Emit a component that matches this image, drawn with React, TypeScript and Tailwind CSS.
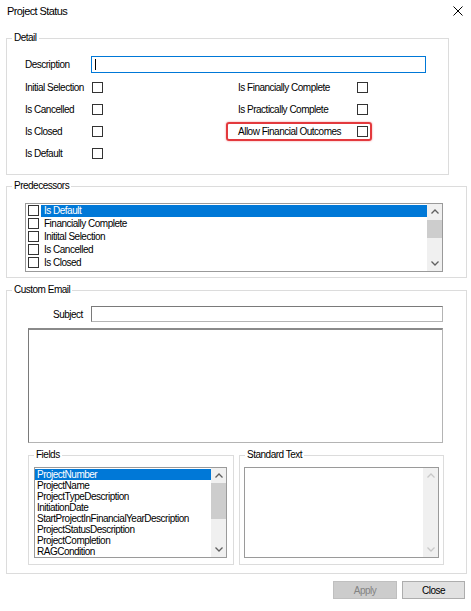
import React from "react";

const FONT = "font-['Liberation_Sans',Arial,sans-serif]";

const PREDECESSORS = ["Is Default", "Financially Complete", "Initital Selection", "Is Cancelled", "Is Closed"];

const FIELDS = [
  "ProjectNumber",
  "ProjectName",
  "ProjectTypeDescription",
  "InitiationDate",
  "StartProjectInFinancialYearDescription",
  "ProjectStatusDescription",
  "ProjectCompletion",
  "RAGCondition",
];

function Chevron({ up, disabled }: { up?: boolean; disabled?: boolean }) {
  return (
    <svg width="8" height="5" viewBox="0 0 8 5" className="block">
      <polyline
        points={up ? "0.5,4.5 4,1 7.5,4.5" : "0.5,0.5 4,4 7.5,0.5"}
        fill="none"
        stroke={disabled ? "#c8c8c8" : "#606060"}
        strokeWidth="1.3"
      />
    </svg>
  );
}

// vertical scrollbar used by the list boxes
function ScrollBar({ thumbTop, thumbHeight, disabled }: { thumbTop?: number; thumbHeight?: number; disabled?: boolean }) {
  return (
    <div className="relative flex h-full w-[15px] shrink-0 flex-col justify-between bg-[#f0f0f0]">
      <div className="flex h-[15px] items-center justify-center">
        <Chevron up disabled={disabled} />
      </div>
      {thumbHeight ? (
        <div className="absolute left-0 right-0 bg-[#cdcdcd]" style={{ top: thumbTop, height: thumbHeight }} />
      ) : null}
      <div className="flex h-[15px] items-center justify-center">
        <Chevron disabled={disabled} />
      </div>
    </div>
  );
}

function CheckBox() {
  return <div className="h-[11px] w-[11px] shrink-0 border border-[#333] bg-white" />;
}

function Group({ title, className, children }: { title: string; className?: string; children: React.ReactNode }) {
  return (
    <fieldset className={`border border-[#dcdcdc] ${className ?? ""}`}>
      <legend className="ml-[5px] px-[2px] text-[10px] leading-[12px] tracking-[-0.5px] text-black">{title}</legend>
      {children}
    </fieldset>
  );
}

function RightRow({ label, marked }: { label: string; marked?: boolean }) {
  return (
    <div className="flex h-[22px] items-center">
      <div
        className={`flex h-[19px] items-center rounded-[3px] border-2 pl-[10px] pr-[2px] ${
          marked ? "border-[#e3393d] shadow-[0_0_2px_rgba(227,57,61,0.6)]" : "border-transparent"
        }`}
      >
        <span className="w-[119px]">{label}</span>
        <CheckBox />
      </div>
    </div>
  );
}

function LeftRow({ label }: { label: string }) {
  return (
    <div className="flex h-[22px] items-center">
      <span className="w-[67px] whitespace-nowrap">{label}</span>
      <CheckBox />
    </div>
  );
}

export default function App() {
  return (
    <div className={`${FONT} h-[611px] w-[471px] overflow-hidden bg-white text-[10px] tracking-[-0.5px] text-black`}>
      {/* title bar */}
      <div className="flex h-[22px] items-center justify-between pl-[7px] pr-[7px]">
        <span className="text-[11px] tracking-[-0.6px]">Project Status</span>
        <svg width="10" height="10" viewBox="0 0 10 10" className="mr-[1px]">
          <path d="M0.5 0.5L9.5 9.5M9.5 0.5L0.5 9.5" stroke="#000" strokeWidth="1" />
        </svg>
      </div>

      {/* Detail */}
      <Group title="Detail" className="ml-[6px] mt-[10px] w-[443px] pb-[10px]">
        <div className="flex items-center pl-[18px] pt-[12px]">
          <span className="w-[66px]">Description</span>
          <div className="flex h-[17px] w-[335px] items-center border border-[#0078d7] bg-white pl-[3px]">
            <div className="h-[11px] w-px bg-black" />
          </div>
        </div>
        <div className="mt-[3px] flex pl-[18px]">
          <div className="w-[201px]">
            <LeftRow label="Initial Selection" />
            <LeftRow label="Is Cancelled" />
            <LeftRow label="Is Closed" />
            <LeftRow label="Is Default" />
          </div>
          <div>
            <RightRow label="Is Financially Complete" />
            <RightRow label="Is Practically Complete" />
            <RightRow label="Allow Financial Outcomes" marked />
          </div>
        </div>
      </Group>

      {/* Predecessors */}
      <Group title="Predecessors" className="ml-[6px] mt-[5px] w-[461px] pb-[5px]">
        <div className="ml-[18px] mt-[11px] flex h-[69px] w-[418px] border border-[#9a9a9a] bg-white">
          <div className="flex-1 pl-[2px]">
            {PREDECESSORS.map((item, i) => (
              <div key={item} className="flex h-[13px] items-center">
                <CheckBox />
                <span
                  className={`ml-[2px] flex h-[12px] flex-1 items-center px-[3px] ${
                    i === 0 ? "bg-[#0078d7] text-white" : ""
                  }`}
                >
                  {item}
                </span>
              </div>
            ))}
          </div>
          <ScrollBar thumbTop={16} thumbHeight={18} />
        </div>
      </Group>

      {/* Custom Email */}
      <Group title="Custom Email" className="ml-[6px] mt-[6px] w-[461px] pb-[8px]">
        <div className="flex items-center pt-[10px]">
          <span className="w-[84px] pl-[46px]">Subject</span>
          <div className="h-[16px] w-[352px] border border-[#b4b4b4] border-l-[#7a7a7a] border-t-[#7a7a7a] bg-white" />
        </div>
        <div className="ml-[21px] mt-[6px] h-[115px] w-[415px] border border-t-2 border-[#b4b4b4] border-l-[#7a7a7a] border-t-[#8a8a8a] bg-white" />

        <div className="ml-[21px] mt-[6px] flex gap-[5px]">
          <Group title="Fields" className="w-[206px] pb-[6px]">
            <div className="ml-[5px] mt-[6px] flex h-[91px] w-[193px] border border-[#9a9a9a] bg-white">
              <div className="min-w-0 flex-1 pt-px">
                {FIELDS.map((field, i) => (
                  <div
                    key={field}
                    className={`flex h-[11px] items-center whitespace-nowrap pl-[2px] ${
                      i === 0 ? "bg-[#0078d7] text-white" : ""
                    }`}
                  >
                    {field}
                  </div>
                ))}
              </div>
              <ScrollBar thumbTop={15} thumbHeight={36} />
            </div>
          </Group>

          <Group title="Standard Text" className="w-[205px] pb-[6px]">
            <div className="ml-[4px] mt-[6px] flex h-[91px] w-[195px] justify-end border border-[#9a9a9a] bg-white">
              <ScrollBar disabled />
            </div>
          </Group>
        </div>
      </Group>

      {/* dialog buttons */}
      <div className="mt-[7px] flex justify-end gap-[5px] pr-[6px]">
        <button
          type="button"
          className="h-[18px] w-[64px] border border-[#bfbfbf] bg-[#cccccc] text-[10px] tracking-[-0.5px] text-[#838383]"
        >
          Apply
        </button>
        <button
          type="button"
          className="h-[18px] w-[63px] border border-[#adadad] bg-[#e1e1e1] text-[10px] tracking-[-0.5px] text-black"
        >
          Close
        </button>
      </div>
    </div>
  );
}
